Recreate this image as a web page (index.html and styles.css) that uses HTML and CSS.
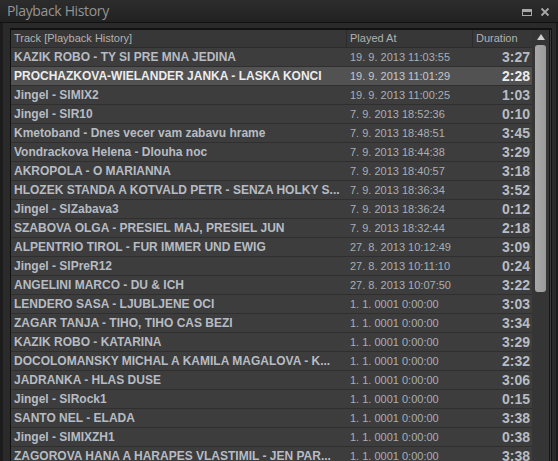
FILE: index.html
```html
<!DOCTYPE html>
<html>
<head>
<meta charset="utf-8">
<link rel="stylesheet" href="styles.css">
</head>
<body>
<div class="window">
  <div class="titlebar">
    <span class="title">Playback History</span>
    <div class="tools">
      <svg class="ico" width="10" height="10" viewBox="0 0 10 10"><rect x="0.5" y="2.5" width="9" height="6" fill="none" stroke="#a8a8a8" stroke-width="1"/><rect x="1" y="3" width="8" height="2" fill="#a8a8a8"/></svg>
      <svg class="ico" width="10" height="10" viewBox="0 0 10 10"><path d="M1.5 1.5 L8.5 8.5 M8.5 1.5 L1.5 8.5" stroke="#a8a8a8" stroke-width="1.8"/></svg>
    </div>
  </div>
  <div class="frame">
    <div class="list">
      <div class="table">
        <div class="head">
          <div class="hcell c-track">Track [Playback History]</div>
          <div class="hcell c-date">Played At</div>
          <div class="hcell c-dur">Duration</div>
        </div>
        <div class="rows">
          <div class="row"><div class="track">KAZIK ROBO - TY SI PRE MNA JEDINA</div><div class="date">19. 9. 2013 11:03:55</div><div class="dur">3:27</div></div>
          <div class="row sel"><div class="track">PROCHAZKOVA-WIELANDER JANKA - LASKA KONCI</div><div class="date">19. 9. 2013 11:01:29</div><div class="dur">2:28</div></div>
          <div class="row"><div class="track">Jingel - SlMIX2</div><div class="date">19. 9. 2013 11:00:25</div><div class="dur">1:03</div></div>
          <div class="row"><div class="track">Jingel - SlR10</div><div class="date">7. 9. 2013 18:52:36</div><div class="dur">0:10</div></div>
          <div class="row"><div class="track">Kmetoband - Dnes vecer vam zabavu hrame</div><div class="date">7. 9. 2013 18:48:51</div><div class="dur">3:45</div></div>
          <div class="row"><div class="track">Vondrackova Helena - Dlouha noc</div><div class="date">7. 9. 2013 18:44:38</div><div class="dur">3:29</div></div>
          <div class="row"><div class="track">AKROPOLA - O MARIANNA</div><div class="date">7. 9. 2013 18:40:57</div><div class="dur">3:18</div></div>
          <div class="row"><div class="track">HLOZEK STANDA A KOTVALD PETR - SENZA HOLKY S...</div><div class="date">7. 9. 2013 18:36:34</div><div class="dur">3:52</div></div>
          <div class="row"><div class="track">Jingel - SlZabava3</div><div class="date">7. 9. 2013 18:36:24</div><div class="dur">0:12</div></div>
          <div class="row"><div class="track">SZABOVA OLGA - PRESIEL MAJ, PRESIEL JUN</div><div class="date">7. 9. 2013 18:32:44</div><div class="dur">2:18</div></div>
          <div class="row"><div class="track">ALPENTRIO TIROL - FUR IMMER UND EWIG</div><div class="date">27. 8. 2013 10:12:49</div><div class="dur">3:09</div></div>
          <div class="row"><div class="track">Jingel - SlPreR12</div><div class="date">27. 8. 2013 10:11:10</div><div class="dur">0:24</div></div>
          <div class="row"><div class="track">ANGELINI MARCO - DU &amp; ICH</div><div class="date">27. 8. 2013 10:07:50</div><div class="dur">3:22</div></div>
          <div class="row"><div class="track">LENDERO SASA - LJUBLJENE OCI</div><div class="date">1. 1. 0001 0:00:00</div><div class="dur">3:03</div></div>
          <div class="row"><div class="track">ZAGAR TANJA - TIHO, TIHO CAS BEZI</div><div class="date">1. 1. 0001 0:00:00</div><div class="dur">3:34</div></div>
          <div class="row"><div class="track">KAZIK ROBO - KATARINA</div><div class="date">1. 1. 0001 0:00:00</div><div class="dur">3:29</div></div>
          <div class="row"><div class="track">DOCOLOMANSKY MICHAL A KAMILA MAGALOVA - K...</div><div class="date">1. 1. 0001 0:00:00</div><div class="dur">2:32</div></div>
          <div class="row"><div class="track">JADRANKA - HLAS DUSE</div><div class="date">1. 1. 0001 0:00:00</div><div class="dur">3:06</div></div>
          <div class="row"><div class="track">Jingel - SlRock1</div><div class="date">1. 1. 0001 0:00:00</div><div class="dur">0:15</div></div>
          <div class="row"><div class="track">SANTO NEL - ELADA</div><div class="date">1. 1. 0001 0:00:00</div><div class="dur">3:38</div></div>
          <div class="row"><div class="track">Jingel - SlMIXZH1</div><div class="date">1. 1. 0001 0:00:00</div><div class="dur">0:38</div></div>
          <div class="row"><div class="track">ZAGOROVA HANA A HARAPES VLASTIMIL - JEN PAR...</div><div class="date">1. 1. 0001 0:00:00</div><div class="dur">3:38</div></div>
        </div>
      </div>
      <div class="scrollbar">
        <div class="arrow"></div>
        <div class="thumb"></div>
      </div>
    </div>
  </div>
</div>
</body>
</html>
```

FILE: styles.css
```css
html, body {
  margin: 0;
  padding: 0;
  background: #1e1e1e;
  overflow: hidden;
}
.window {
  width: 558px;
  height: 461px;
  display: flex;
  flex-direction: column;
  font-family: "Liberation Sans", Arial, sans-serif;
  overflow: hidden;
}
.titlebar {
  height: 22px;
  flex: none;
  display: flex;
  align-items: center;
  justify-content: space-between;
  background: linear-gradient(#2c2c2c, #222222);
  padding: 0 8px 0 7px;
  border-bottom: 1px solid #111;
}
.title {
  font-family: "Open Sans", "Liberation Sans", sans-serif;
  font-size: 14px;
  letter-spacing: -0.35px;
  color: #949494;
  line-height: 22px;
}
.tools {
  display: flex;
  gap: 8px;
  align-items: center;
  padding-top: 2px;
}
.ico { display: block; }
.frame {
  flex: 1;
  min-height: 0;
  background: #2a2a2a;
  border-left: 3px solid #1c1c1c;
  border-right: 2px solid #1c1c1c;
  padding: 5px 4px 0 7px;
  display: flex;
}
.list {
  flex: 1;
  min-width: 0;
  display: flex;
  border: 1px solid #111;
  border-top: 2px solid #121212;
  border-bottom: none;
  background: #3c3c3c;
}
.table {
  width: 521px;
  flex: none;
  display: flex;
  flex-direction: column;
  overflow: hidden;
}
.head {
  display: grid;
  grid-template-columns: 335px 126px 60px;
  height: 18px;
  box-sizing: border-box;
  background: #373737;
  border-bottom: 1px solid #2c2c2c;
  flex: none;
}
.hcell {
  font-size: 11px;
  color: #b2b2b2;
  line-height: 17px;
  padding-left: 3px;
  white-space: nowrap;
  overflow: hidden;
}
.hcell.c-date, .hcell.c-dur {
  border-left: 1px solid #2b2b2b;
  padding-left: 3px;
}
.rows {
  display: flex;
  flex-direction: column;
}
.row {
  display: grid;
  grid-template-columns: 335px 126px 60px;
  height: 18px;
  border-bottom: 1px solid #2f2f2f;
  background: #3d3d3d;
  align-items: center;
  flex: none;
}
.row.sel {
  background: #525252;
}
.track {
  font-weight: bold;
  font-size: 12px;
  color: #b7bcc4;
  padding-left: 3px;
  white-space: nowrap;
  overflow: hidden;
  text-overflow: ellipsis;
}
.date {
  font-size: 11px;
  color: #a9aeb6;
  padding-left: 4px;
  white-space: nowrap;
}
.dur {
  font-weight: bold;
  font-size: 14px;
  color: #b7bcc4;
  text-align: right;
  padding-right: 2px;
}
.row.sel .track, .row.sel .dur { color: #ececec; }
.row.sel .date { color: #c4c8ce; }
.scrollbar {
  width: 17px;
  flex: none;
  background: #353535;
  display: flex;
  flex-direction: column;
  align-items: center;
  border-right: 1px solid #151515;
}
.arrow {
  margin-top: 4px;
  width: 0;
  height: 0;
  border-left: 4px solid transparent;
  border-right: 4px solid transparent;
  border-bottom: 6px solid #cfcfcf;
}
.thumb {
  margin-top: 5px;
  width: 11px;
  height: 247px;
  border-radius: 3px;
  background: linear-gradient(90deg, #a8a8a8, #9a9a9a);
}
```
